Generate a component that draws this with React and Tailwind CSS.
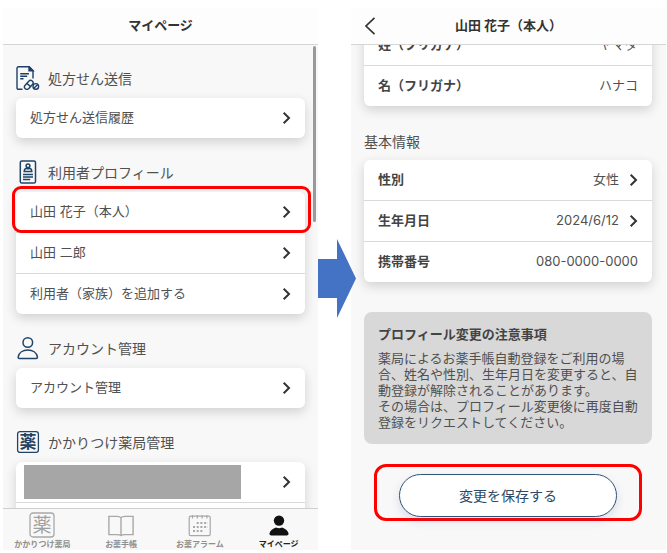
import React from "react";

const ChevronRight = () => (
  <svg width="9" height="14" viewBox="0 0 9 14" fill="none" className="shrink-0" aria-hidden="true">
    <path d="M1.7 1.8 L7 7 L1.7 12.2" stroke="#333" strokeWidth="2" />
  </svg>
);

const PrescriptionIcon = () => (
  <svg width="24" height="24" viewBox="0 0 24 24" fill="none" stroke="#1f3f6a" strokeWidth="1.4" aria-hidden="true">
    <path d="M6.5 23.3 H2.6 Q1 23.3 1 21.7 V2.3 Q1 .8 2.6 .8 H13.2 L17 4.6 V12.5" />
    <path d="M13 .9 V4.8 H17 Z" fill="#1f3f6a" />
    <path d="M4.2 7.7 H13 M4.2 10.2 H11.2 M4.2 12.7 H7.5" />
    <rect x="7.6" y="16.4" width="10.4" height="5" rx="2.5" transform="rotate(-48 12.8 18.9)" />
    <path d="M10.7 17.2 L14.6 20.6" />
    <circle cx="19.8" cy="20.4" r="2.8" />
    <path d="M17.8 22.3 L21.8 18.5" />
  </svg>
);

const ProfileIcon = () => (
  <svg width="24" height="24" viewBox="0 0 24 24" fill="none" stroke="#1f4468" strokeWidth="1.5" aria-hidden="true">
    <rect x="4.3" y="1" width="15.2" height="22" rx="1.6" />
    <circle cx="12" cy="5.8" r="1.9" />
    <path d="M8.2 11.6 Q8.2 8.6 10.6 8.3 Q12 9.2 13.4 8.3 Q15.8 8.6 15.8 11.6 Z" />
    <path d="M7 14.4 H17 M7 16.9 H17 M7 19.4 H14.2" />
  </svg>
);

const AccountIcon = () => (
  <svg width="24" height="24" viewBox="0 0 24 24" fill="none" stroke="#1f4468" strokeWidth="1.5" aria-hidden="true">
    <circle cx="11.8" cy="6.5" r="4.8" />
    <path d="M3.4 22.4 Q2 22.4 2.2 20.8 C3 16.6 7 14 11.8 14 C16.6 14 20.6 16.6 21.4 20.8 Q21.6 22.4 20.2 22.4 Z" />
  </svg>
);

const PharmacyIcon = () => (
  <svg width="24" height="24" viewBox="0 0 24 24" className="overflow-visible" aria-hidden="true">
    <rect x="1.6" y="1.6" width="20.8" height="20.8" rx="2.4" fill="none" stroke="#1f4468" strokeWidth="1.3" />
    <text x="12" y="18.2" textAnchor="middle" className="fill-[#1f4468] font-['Noto_Sans_CJK_JP',sans-serif] text-[17px] font-bold">
      薬
    </text>
  </svg>
);

const NavPharmacyIcon = () => (
  <svg width="26" height="26" viewBox="0 0 26 26" className="overflow-visible" aria-hidden="true">
    <rect x="1" y="1" width="24" height="24" rx="3" fill="none" stroke="#a8a8a8" strokeWidth="1.3" />
    <text x="13" y="20" textAnchor="middle" className="fill-[#a0a0a0] font-['Noto_Sans_CJK_JP',sans-serif] text-[19px]">
      薬
    </text>
  </svg>
);

const BookIcon = () => (
  <svg width="26" height="25" viewBox="0 0 26 25" fill="none" stroke="#a8a8a8" strokeWidth="1.4" aria-hidden="true">
    <path d="M13 4.8 Q12 3.4 9 3.4 H.9 V21.6 H9 Q12 21.6 13 22.6 Q14 21.6 17 21.6 H25.1 V3.4 H17 Q14 3.4 13 4.8 V22.6" />
  </svg>
);

const CalendarIcon = () => (
  <svg width="24" height="25" viewBox="0 0 24 25" fill="none" stroke="#a8a8a8" strokeWidth="1.2" aria-hidden="true">
    <rect x="1.2" y="3.2" width="21" height="19.4" rx="1.4" />
    <path d="M4.5 2 V5.4 M9.3 2 V5.4 M14.1 2 V5.4 M18.9 2 V5.4" />
    <path d="M8.7 10 H20 M5 14 H20 M5 18 H16" strokeWidth="2" strokeDasharray="2 1.7" />
  </svg>
);

const UserSolidIcon = () => (
  <svg width="22" height="25" viewBox="0 0 22 25" fill="#111" aria-hidden="true">
    <circle cx="11" cy="7.6" r="5.2" />
    <path d="M3 22.4 Q1.2 22.4 1.4 20.6 C2 17.4 5 15.6 8 14.4 Q11 16 14 14.4 C17 15.6 20 17.4 20.6 20.6 Q20.8 22.4 19 22.4 Z" />
  </svg>
);

function Card({ children }) {
  return (
    <div className="divide-y divide-[#d9d9d9] rounded-md bg-white shadow-[0_4px_12px_rgba(0,0,0,0.16)]">
      {children}
    </div>
  );
}

function LinkRow({ label, highlighted }) {
  return (
    <div className="relative">
      <button type="button" className="flex h-10 w-full items-center justify-between px-3.5 text-left text-[13px] text-[#505050]">
        {label}
        <ChevronRight />
      </button>
      {highlighted && (
        <span className="pointer-events-none absolute -top-1.5 -right-1.5 -bottom-px -left-1 rounded-[9px] border-3 border-[#ff0000]" />
      )}
    </div>
  );
}

function Section({ icon, title, children }) {
  return (
    <section>
      <h2 className="mb-2 flex h-6 items-center text-[14px] text-[#505050]">
        <span className="mr-2 flex w-6 justify-center">{icon}</span>
        {title}
      </h2>
      <Card>{children}</Card>
    </section>
  );
}

function InfoRow({ label, value, editable }) {
  const Tag = editable ? "button" : "div";
  return (
    <div>
      <Tag className="flex h-10 w-full items-center justify-between px-3.5 text-[13px]">
        <span className="font-bold text-[#444]">{label}</span>
        <span className="flex items-center gap-2.5 text-[#505050]">
          {value}
          {editable && <ChevronRight />}
        </span>
      </Tag>
    </div>
  );
}

function NavItem({ icon, label, active }) {
  return (
    <button type="button" className={active ? "flex flex-1 flex-col items-center text-[#222]" : "flex flex-1 flex-col items-center text-[#8f8f8f]"}>
      <span className="flex h-[26px] items-center">{icon}</span>
      <span className="text-[8px] leading-3 font-bold">{label}</span>
    </button>
  );
}

export default function App() {
  return (
    <main className="flex h-screen bg-white pt-2 pr-px pb-[3px] pl-[3px] font-['Inter','Noto_Sans_CJK_JP',sans-serif]">
      <div className="flex min-w-0 flex-1 flex-col bg-[#f8f8f8]">
        <header className="flex h-[37px] shrink-0 items-center justify-center border-b border-[#d5d5d5] bg-[#fdfdfd]">
          <h1 className="text-[13px] font-bold text-[#333]">マイページ</h1>
        </header>
        <div className="relative min-h-0 flex-1 overflow-hidden">
          <div className="flex flex-col gap-[22px] px-[13px] pt-[21px]">
            <Section icon={<PrescriptionIcon />} title="処方せん送信">
              <LinkRow label="処方せん送信履歴" />
            </Section>
            <Section icon={<ProfileIcon />} title="利用者プロフィール">
              <LinkRow label="山田 花子（本人）" highlighted />
              <LinkRow label="山田 二郎" />
              <LinkRow label="利用者（家族）を追加する" />
            </Section>
            <Section icon={<AccountIcon />} title="アカウント管理">
              <LinkRow label="アカウント管理" />
            </Section>
            <Section icon={<PharmacyIcon />} title="かかりつけ薬局管理">
              <div>
                <button type="button" className="flex h-10 w-full items-center justify-between pr-3.5 pl-2">
                  <span className="h-[34px] w-[217px] bg-[#a6a6a6]" />
                  <ChevronRight />
                </button>
              </div>
              <div className="h-10" />
            </Section>
          </div>
          <span className="absolute top-px right-0.5 h-44 w-[3px] rounded-full bg-[#9a9a9a]" />
        </div>
        <nav className="flex h-[42px] shrink-0 border-t border-[#cfcfcf] pt-[3px]">
          <NavItem icon={<NavPharmacyIcon />} label="かかりつけ薬局" />
          <NavItem icon={<BookIcon />} label="お薬手帳" />
          <NavItem icon={<CalendarIcon />} label="お薬アラーム" />
          <NavItem icon={<UserSolidIcon />} label="マイページ" active />
        </nav>
      </div>

      <div className="z-10 flex w-[33px] shrink-0 items-center">
        <svg width="38" height="80" viewBox="0 0 38 80" className="shrink-0" aria-hidden="true">
          <path d="M0 20 H19 V0 L38 39.5 L19 79 V59 H0 Z" fill="#4472c4" />
        </svg>
      </div>

      <div className="flex min-w-0 flex-1 flex-col bg-[#f8f8f8]">
        <header className="grid h-[37px] shrink-0 grid-cols-[40px_1fr_40px] items-center border-b border-[#d5d5d5] bg-[#fdfdfd]">
          <button type="button" aria-label="戻る" className="flex justify-center">
            <svg width="14" height="20" viewBox="0 0 14 20" fill="none" aria-hidden="true">
              <path d="M10.5 1.8 L2 10 L10.5 18.2" stroke="#333" strokeWidth="1.7" />
            </svg>
          </button>
          <h1 className="text-center text-[13px] font-bold text-[#333]">山田 花子（本人）</h1>
        </header>
        <div className="min-h-0 flex-1 overflow-hidden">
          <div className="-mt-5 pr-3.5 pl-[13px]">
            <Card>
              <InfoRow label="姓（フリガナ）" value="ヤマダ" />
              <InfoRow label="名（フリガナ）" value="ハナコ" />
            </Card>
            <h2 className="mt-6 mb-1.5 text-[14px] leading-6 text-[#505050]">基本情報</h2>
            <Card>
              <InfoRow label="性別" value="女性" editable />
              <InfoRow label="生年月日" value="2024/6/12" editable />
              <InfoRow label="携帯番号" value="080-0000-0000" />
            </Card>
            <section className="mt-[30px] rounded-lg bg-[#d8d8d8] px-3.5 pt-3 pb-3.5 text-[13px] text-[#505050]">
              <h3 className="mb-1.5 leading-5 font-bold text-[#444]">プロフィール変更の注意事項</h3>
              <p className="leading-4">
                薬局によるお薬手帳自動登録をご利用の場合、姓名や性別、生年月日を変更すると、自動登録が解除されることがあります。
                <br />
                その場合は、プロフィール変更後に再度自動登録をリクエストしてください。
              </p>
            </section>
            <div className="mx-2.5 mt-5 rounded-xl border-3 border-[#ff0000] px-[22px] pt-[7px] pb-px">
              <button
                type="button"
                className="h-[43px] w-full rounded-full border border-[#2f5475] bg-white text-[14px] text-[#2c4a68] shadow-[0_4px_10px_rgba(60,90,160,0.16)]"
              >
                変更を保存する
              </button>
            </div>
          </div>
        </div>
      </div>
    </main>
  );
}
